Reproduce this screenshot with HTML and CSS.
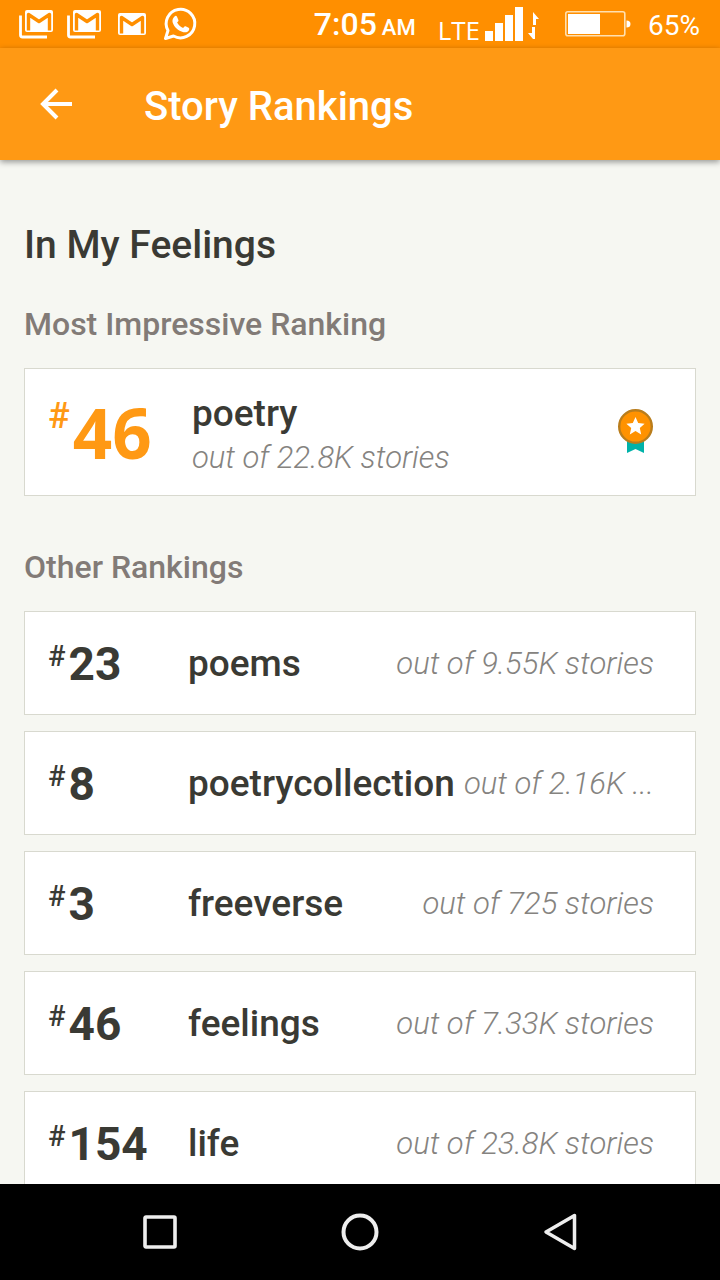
FILE: index.html
```html
<!DOCTYPE html>
<html lang="en">
<head>
  <meta charset="UTF-8" />
  <meta name="viewport" content="width=device-width, initial-scale=1.0"/>
  <title>Story Rankings</title>
  <link rel="stylesheet" href="styles.css">
</head>
<body>
  <div class="status-bar">
    <div class="notifications">
      <svg width="36" height="32" viewBox="0 0 36 32">
        <path d="M2.500 7.500V27a2 2 0 0 0 2 2H29" fill="none" stroke="#fff" stroke-width="2.800"/>
        <rect x="7" y="2" width="28" height="22" rx="2" fill="#fff"/>
        <path d="M10.500 22.500V6.500L21 13.500L31.500 6.500V22.500" fill="none" stroke="#ff8f00" stroke-width="3.400" stroke-linejoin="round"/>
      </svg>
      <svg width="36" height="32" viewBox="0 0 36 32">
        <path d="M2.500 7.500V27a2 2 0 0 0 2 2H29" fill="none" stroke="#fff" stroke-width="2.800"/>
        <rect x="7" y="2" width="28" height="22" rx="2" fill="#fff"/>
        <path d="M10.500 22.500V6.500L21 13.500L31.500 6.500V22.500" fill="none" stroke="#ff8f00" stroke-width="3.400" stroke-linejoin="round"/>
      </svg>
      <svg width="36" height="32" viewBox="0 0 36 32">
        <rect x="4" y="5" width="28" height="22" rx="2" fill="#fff"/>
        <path d="M7.500 25.500V9.500L18 16.500L28.500 9.500V25.500" fill="none" stroke="#ff8f00" stroke-width="3.400" stroke-linejoin="round"/>
      </svg>
      <svg width="36" height="36" viewBox="0 0 36 36">
        <path d="M3.500 32.500L6 24.500A14.300 14.300 0 1 1 11.500 30Z" fill="none" stroke="#fff" stroke-width="3" stroke-linejoin="round"/>
        <path d="M12.500 10.500c1-1 2-.8 2.500.2l1.400 3.300c.3.800-.2 1.400-1.300 2.600 1.400 2.700 3.300 4.300 6 5.400 1.200-1.500 1.700-2.100 2.500-1.800l3 1.500c1 .5.700 1.700.2 2.700-1 1.700-3.300 2.300-5.300 1.800-5.500-1.500-9.300-5-10.900-10-.5-2 .4-4.400 1.900-5.700Z" fill="#fff"/>
      </svg>
    </div>
    <div class="clock"><span>7:05</span><small>AM</small></div>
    <div class="network">
      <span class="lte">LTE</span>
      <svg width="56" height="34" viewBox="0 0 56 34">
        <path d="M1 24h8v10h-8zM11 16h8v18h-8zM21 8h8v26h-8zM31 0h8v34h-8z" fill="#fff"/>
        <path d="M49 5l6 7h-3v6h-3zM51 20v12h-2l-5-6h4v-6z" fill="#fff"/>
      </svg>
    </div>
    <div class="battery">
      <svg width="68" height="28" viewBox="0 0 68 28">
        <rect x="1.800" y="1.800" width="59" height="24" rx="2" fill="none" stroke="#ffe0b0" stroke-width="1.600"/>
        <rect x="4" y="4" width="32" height="20" fill="#fff"/>
        <path d="M62.500 10.500q4 0 4 3.500t-4 3.500z" fill="#fff"/>
      </svg>
      <span>65%</span>
    </div>
  </div>

  <header>
    <a href="#" class="back" aria-label="Back">
      <svg width="32" height="32" viewBox="0 0 32 32">
        <path d="M32 16H3M17 2L3 16L17 30" fill="none" stroke="#fff" stroke-width="4"/>
      </svg>
    </a>
    <h1>Story Rankings</h1>
  </header>

  <main>
    <h2>In My Feelings</h2>

    <h3>Most Impressive Ranking</h3>
    <div class="card top-card">
      <div class="rank"><span class="hash">#</span><strong>46</strong></div>
      <div class="details">
        <div class="tag">poetry</div>
        <div class="count">out of 22.8K stories</div>
      </div>
      <svg class="medal" width="36" height="46" viewBox="0 0 36 46">
        <path d="M9 30h17v14l-8.500-4L9 44z" fill="#00b2a9"/>
        <circle cx="17.500" cy="17.500" r="16.300" fill="#ff9200" stroke="#b97d1c" stroke-width="2.400"/>
        <path d="M17.500 8l2.700 6 6.400.7-4.800 4.300 1.400 6.400-5.700-3.300-5.700 3.300 1.400-6.400-4.800-4.300 6.400-.7z" fill="#fff"/>
      </svg>
    </div>

    <h3>Other Rankings</h3>
    <div class="card">
      <div class="rank"><span class="hash">#</span><strong>23</strong></div>
      <div class="tag">poems</div>
      <div class="count">out of 9.55K stories</div>
    </div>
    <div class="card">
      <div class="rank"><span class="hash">#</span><strong>8</strong></div>
      <div class="tag">poetrycollection</div>
      <div class="count">out of 2.16K ...</div>
    </div>
    <div class="card">
      <div class="rank"><span class="hash">#</span><strong>3</strong></div>
      <div class="tag">freeverse</div>
      <div class="count">out of 725 stories</div>
    </div>
    <div class="card">
      <div class="rank"><span class="hash">#</span><strong>46</strong></div>
      <div class="tag">feelings</div>
      <div class="count">out of 7.33K stories</div>
    </div>
    <div class="card">
      <div class="rank"><span class="hash">#</span><strong>154</strong></div>
      <div class="tag">life</div>
      <div class="count">out of 23.8K stories</div>
    </div>
  </main>

  <nav>
    <button aria-label="Recent apps">
      <svg width="40" height="40" viewBox="0 0 40 40"><rect x="5" y="5" width="30" height="30" rx="1" fill="none" stroke="#eee" stroke-width="3.600" stroke-linejoin="round"/></svg>
    </button>
    <button aria-label="Home">
      <svg width="40" height="40" viewBox="0 0 40 40"><circle cx="20" cy="20" r="16.500" fill="none" stroke="#eee" stroke-width="4"/></svg>
    </button>
    <button aria-label="Back">
      <svg width="40" height="40" viewBox="0 0 40 40"><path d="M34.500 3.500V36.500L6 20Z" fill="none" stroke="#eee" stroke-width="3.500" stroke-linejoin="round"/></svg>
    </button>
  </nav>
</body>
</html>
```
FILE: styles.css
```css
* {
  box-sizing: border-box;
}

body {
  font-family: Roboto, sans-serif;
  background: #f6f7f2;
  color: #3a3a34;
  margin: 0;
  height: 100vh;
  display: flex;
  flex-direction: column;
}

h1, h2, h3 {
  margin: 0;
  font-weight: 500;
}

svg {
  display: block;
  flex: none;
}

.status-bar {
  background: #ff8f00;
  color: white;
  height: 48px;
  flex: none;
  display: flex;
  align-items: center;
  padding: 0 20px 0 18px;
}

.notifications {
  display: flex;
  align-items: center;
  gap: 12px;
  margin-right: auto;
}

.clock {
  display: flex;
  align-items: baseline;
  gap: 5px;
  font-size: 32px;
  font-weight: 500;
  line-height: 40px;
  padding-top: 4px;
  margin-right: 22px;
}

.clock small {
  font-size: 22px;
}

.network {
  display: flex;
  align-items: flex-end;
  gap: 4px;
  margin-right: 24px;
}

.lte {
  font-family: "Open Sans", sans-serif;
  font-size: 26px;
  font-weight: 500;
  line-height: 22px;
}

.battery {
  display: flex;
  align-items: center;
  gap: 16px;
  font-size: 28px;
  line-height: 32px;
}

.battery span {
  padding-top: 4px;
}

header {
  background: #ff9914;
  color: white;
  height: 112px;
  flex: none;
  display: flex;
  align-items: center;
  gap: 72px;
  padding: 4px 40px 0;
  box-shadow: 0 2px 6px rgba(0, 0, 0, 0.4);
  z-index: 1;
}

.back {
  margin-bottom: 4px;
}

h1 {
  font-size: 40px;
}

main {
  flex: 1;
  min-height: 0;
  overflow: hidden;
  padding: 61px 24px 0;
}

h2 {
  font-size: 39px;
  line-height: 48px;
  margin-bottom: 35px;
}

h3 {
  color: #827b77;
  font-size: 32px;
  line-height: 40px;
  margin-bottom: 24px;
}

.card {
  background: white;
  border: 1px solid #d8d9cf;
  height: 104px;
  display: flex;
  align-items: center;
  padding: 2px 41px 0 23px;
  margin-bottom: 16px;
}

.rank {
  display: flex;
  align-items: flex-start;
  gap: 3px;
  width: 140px;
  flex: none;
}

.hash {
  font-size: 29px;
  font-weight: 500;
  line-height: 42px;
}

.rank strong {
  font-size: 46px;
  line-height: 58px;
}

.tag {
  font-size: 37px;
  font-weight: 500;
  line-height: 44px;
}

.count {
  color: #858380;
  font-size: 31px;
  font-style: italic;
  font-weight: 300;
  line-height: 40px;
  margin-left: auto;
  white-space: nowrap;
}

.top-card {
  height: 128px;
  padding-top: 0;
  margin-bottom: 51px;
}

.top-card .rank {
  color: #ff9914;
  width: 144px;
}

.top-card .hash {
  font-size: 36px;
  line-height: 58px;
}

.top-card strong {
  font-family: "Open Sans", sans-serif;
  font-size: 69px;
  line-height: 90px;
}

.top-card .tag {
  line-height: 48px;
}

.details {
  padding-top: 4px;
}

.medal {
  margin-left: auto;
}

nav {
  background: black;
  height: 96px;
  flex: none;
  display: flex;
  justify-content: center;
  gap: 160px;
}

nav button {
  background: none;
  border: none;
  padding: 0;
}
```
